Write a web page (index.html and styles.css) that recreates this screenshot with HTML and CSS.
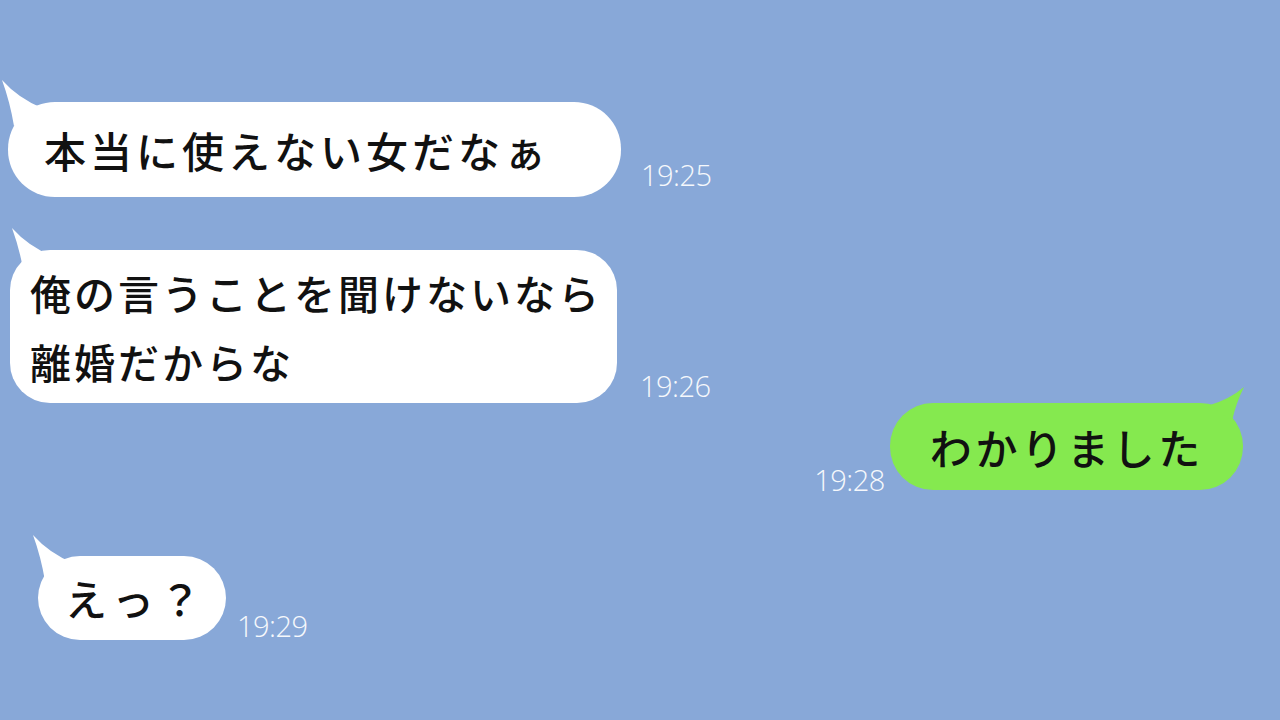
FILE: index.html
```html
<!DOCTYPE html>
<html lang="ja">
<head>
<meta charset="utf-8">
<title>chat</title>
<link rel="stylesheet" href="styles.css">
</head>
<body>
<main class="chat">
  <div class="row row-1">
    <div class="bubble bubble-in b1">
      <svg class="tail tail-left" width="44" height="50" viewBox="0 0 44 50"><path d="M2 2 Q18 20 42 30 L14 48 Q10 24 2 2 Z"/></svg>
      <p class="msg">本当に使えない女だなぁ</p>
    </div>
    <span class="time t1">19:25</span>
  </div>

  <div class="row row-2">
    <div class="bubble bubble-in b2">
      <svg class="tail tail-left" width="44" height="50" viewBox="0 0 44 50"><path d="M2 2 Q18 20 42 30 L14 48 Q10 24 2 2 Z"/></svg>
      <p class="msg">俺の言うことを聞けないなら<br>離婚だからな</p>
    </div>
    <span class="time t2">19:26</span>
  </div>

  <div class="row row-3">
    <span class="time t3">19:28</span>
    <div class="bubble bubble-out b3">
      <svg class="tail tail-right" width="40" height="40" viewBox="0 0 40 40"><path d="M38 2 Q24 14 4 20 L26 36 Q30 18 38 2 Z"/></svg>
      <p class="msg">わかりました</p>
    </div>
  </div>

  <div class="row row-4">
    <div class="bubble bubble-in b4">
      <svg class="tail tail-left" width="44" height="50" viewBox="0 0 44 50"><path d="M2 2 Q18 20 42 30 L14 48 Q10 24 2 2 Z"/></svg>
      <p class="msg">えっ？</p>
    </div>
    <span class="time t4">19:29</span>
  </div>
</main>
</body>
</html>
```

FILE: styles.css
```css
html, body {
  margin: 0;
  padding: 0;
}

body {
  width: 1280px;
  height: 720px;
  overflow: hidden;
  background: #88a8d8;
  font-family: "Noto Sans CJK JP", "Noto Sans", sans-serif;
}

.chat {
  display: flex;
  flex-direction: column;
  padding-top: 102px;
}

.row {
  display: flex;
  align-items: flex-end;
}

.row-1 { margin-left: 8px; }
.row-2 { margin-left: 10px; margin-top: 53px; }
.row-3 { justify-content: flex-end; margin-right: 37px; }
.row-4 { margin-left: 38px; margin-top: 66px; }

.bubble {
  position: relative;
  display: flex;
  align-items: center;
}

.bubble-in { background: #ffffff; }
.bubble-in .tail path { fill: #ffffff; }
.bubble-out { background: #85e94f; }
.bubble-out .tail path { fill: #85e94f; }

.tail {
  position: absolute;
  display: block;
}

.tail-left {
  left: -8px;
  top: -24px;
}

.tail-right {
  right: -3px;
  top: -18px;
}

.msg {
  margin: 0;
  color: #111111;
  font-weight: 500;
  white-space: nowrap;
}

.b1 {
  height: 95px;
  border-radius: 47px;
  padding: 0 71px 0 36px;
}
.b1 .msg {
  font-size: 42px;
  letter-spacing: 4px;
  line-height: 1;
}

.b2 {
  height: 153px;
  border-radius: 40px;
  padding: 0 15px 0 20px;
  box-sizing: border-box;
}
.b2 .msg {
  font-size: 41px;
  letter-spacing: 3px;
  line-height: 69px;
}
.b2 .tail-left {
  left: 0;
  top: -24px;
}

.b3 {
  height: 87px;
  border-radius: 43px;
  padding: 0 39px 0 40px;
}
.b3 .msg {
  font-size: 42px;
  letter-spacing: 3.7px;
  line-height: 1;
}

.b4 {
  height: 84px;
  border-radius: 42px;
  padding: 0 20px 0 27px;
}
.b4 .msg {
  font-size: 42px;
  letter-spacing: 5px;
  line-height: 1;
}
.b4 .tail-left {
  left: -7px;
  top: -23px;
}

.time {
  font-family: "Open Sans", "DejaVu Sans", sans-serif;
  font-weight: 300;
  font-size: 29px;
  line-height: 29px;
  letter-spacing: -0.5px;
  color: #f6f8fc;
}

.t1 { margin-left: 20px; margin-bottom: 8px; }
.t2 { margin-left: 23px; margin-bottom: 3px; }
.t3 { margin-right: 5px; margin-bottom: -4px; }
.t4 { margin-left: 11px; margin-bottom: 0; }
```
